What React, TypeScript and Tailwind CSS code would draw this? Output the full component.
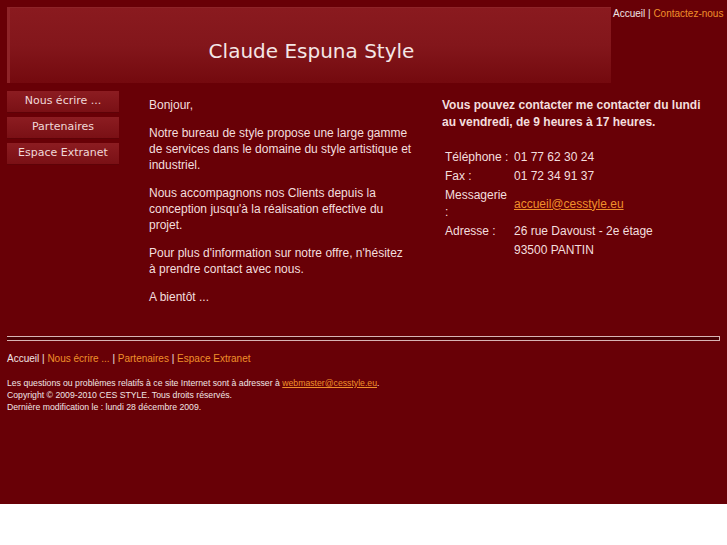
import React from "react";

const navItems = ["Nous écrire ...", "Partenaires", "Espace Extranet"];

export default function App() {
  return (
    <div className="w-full bg-white">
      <div className="relative h-[504px] w-full bg-[#680006] text-[#f3dede]" style={{ fontFamily: '"Liberation Sans", Arial, sans-serif' }}>
        {/* header */}
        <div className="flex">
          <div className="ml-[7px] mt-[7px] flex h-[76px] w-[604px] items-center justify-center border-l-[3px] border-t border-[#8e2428] bg-gradient-to-b from-[#8a1a1f] via-[#83161b] to-[#74090e] pl-[2px] pt-[10px]">
            <span className="text-[20px] text-[#f4e6e6]" style={{ fontFamily: '"DejaVu Sans", Verdana, sans-serif' }}>
              Claude Espuna Style
            </span>
          </div>
          <div className="ml-[2px] mt-[7px] text-[10px] leading-[13px] text-[#f0e4e4]">
            Accueil | <span className="text-[#f0902a]">Contactez-nous</span>
          </div>
        </div>

        {/* body */}
        <div className="mt-[8px] flex">
          <div className="ml-[7px] flex w-[112px] flex-col gap-[4px]" style={{ fontFamily: '"DejaVu Sans", Verdana, sans-serif' }}>
            {navItems.map((n) => (
              <div
                key={n}
                className="flex h-[22px] items-center justify-center border-b border-[#5e0207] bg-gradient-to-b from-[#8c1c21] to-[#7a1015] text-[11px] text-[#f0d8d8]"
              >
                {n}
              </div>
            ))}
          </div>

          <div className="ml-[30px] mt-[6px] w-[263px] text-[12px] leading-[16px] text-[#f3dede]">
            <p>Bonjour,</p>
            <p className="mt-[12px]">
              Notre bureau de style propose une large gamme de services dans le domaine du style artistique et industriel.
            </p>
            <p className="mt-[12px]">
              Nous accompagnons nos Clients depuis la conception jusqu'à la réalisation effective du projet.
            </p>
            <p className="mt-[12px]">Pour plus d'information sur notre offre, n'hésitez à prendre contact avec nous.</p>
            <p className="mt-[12px]">A bientôt ...</p>
          </div>

          <div className="ml-[30px] mt-[6px] w-[270px] text-[12px] text-[#f3dede]">
            <p className="font-bold leading-[17px]">
              Vous pouvez contacter me contacter du lundi au vendredi, de 9 heures à 17 heures.
            </p>
            <div className="ml-[3px] mt-[18px] grid grid-cols-[69px_1fr] gap-y-[2px] leading-[17px]">
              <div className="pr-[3px]">Téléphone :</div>
              <div>01 77 62 30 24</div>
              <div className="pr-[3px]">Fax :</div>
              <div>01 72 34 91 37</div>
              <div className="w-[64px]">Messagerie :</div>
              <div className="flex items-center">
                <span className="text-[#f0902a] underline">accueil@cesstyle.eu</span>
              </div>
              <div className="pr-[3px]">Adresse :</div>
              <div>26 rue Davoust - 2e étage</div>
              <div></div>
              <div>93500 PANTIN</div>
            </div>
          </div>
        </div>

        {/* rule */}
        <div className="absolute left-[7px] top-[336px] h-[5px] w-[713px] border-y border-r border-[#d8b4b4] bg-[#4a0004]" />

        {/* footer */}
        <div className="absolute left-[7px] top-[352px]">
          <div className="text-[10px] leading-[13px] text-[#f0e4e4]">
            Accueil | <span className="text-[#f0902a]">Nous écrire ...</span> | <span className="text-[#f0902a]">Partenaires</span> | <span className="text-[#f0902a]">Espace Extranet</span>
          </div>
          <div className="mt-[12px] text-[8.7px] leading-[12px] text-[#f0e4e4]">
            <div>
              Les questions ou problèmes relatifs à ce site Internet sont à adresser à <span className="text-[#f0902a] underline">webmaster@cesstyle.eu</span>.
            </div>
            <div>Copyright © 2009-2010 CES STYLE. Tous droits réservés.</div>
            <div>Dernière modification le : lundi 28 décembre 2009.</div>
          </div>
        </div>
      </div>
      <div className="h-[41px] bg-white" />
    </div>
  );
}
